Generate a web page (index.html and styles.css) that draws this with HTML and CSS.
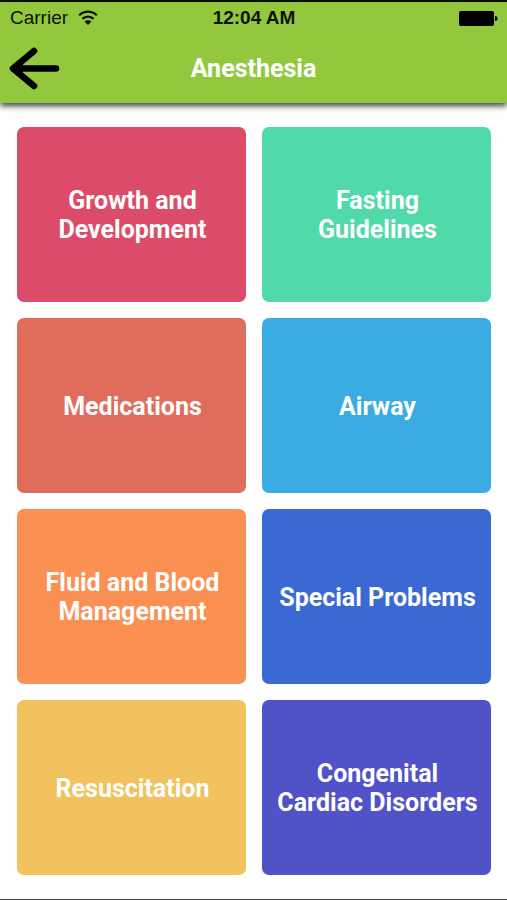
FILE: index.html
```html
<!DOCTYPE html>
<html lang="en">
<head>
    <meta charset="UTF-8">
    <meta name="viewport" content="width=device-width, initial-scale=1">
    <title>Anesthesia</title>
    <link rel="stylesheet" href="styles.css">
</head>
<body>
    <header class="header">
        <div class="status-bar">
            <div class="carrier">
                <span>Carrier</span>
                <svg class="wifi" width="20" height="16" viewBox="0 0 20 16" aria-hidden="true">
                    <path d="M1.2 5.2a12.6 12.6 0 0 1 17.6 0" fill="none" stroke="#0c1204" stroke-width="2.3"/>
                    <path d="M4.5 8.8a8 8 0 0 1 11 0" fill="none" stroke="#0c1204" stroke-width="2.3"/>
                    <path d="M10 15 6.6 11.7a4.8 4.8 0 0 1 6.8 0z" fill="#0c1204"/>
                </svg>
            </div>
            <time class="clock">12:04 AM</time>
            <svg class="battery" width="39" height="15" viewBox="0 0 39 15" aria-hidden="true">
                <rect width="35" height="15" rx="2"/>
                <path d="M36 5q2.5 0 2.5 2.5T36 10z"/>
            </svg>
        </div>
        <nav class="nav-bar">
            <button class="back" type="button" aria-label="Back">
                <svg width="52" height="44" viewBox="0 0 52 44" aria-hidden="true">
                    <path d="M25 4 4 21.500l21 17.500M6 21.500h41" fill="none" stroke="#000" stroke-width="6.600" stroke-linecap="round" stroke-linejoin="round"/>
                    <path d="M3 21.500 14 13v17z"/>
                </svg>
            </button>
            <h1>Anesthesia</h1>
        </nav>
    </header>

    <main class="topics">
        <button class="topic pink" type="button">Growth and<br>Development</button>
        <button class="topic green" type="button">Fasting<br>Guidelines</button>
        <button class="topic coral" type="button">Medications</button>
        <button class="topic sky" type="button">Airway</button>
        <button class="topic orange" type="button">Fluid and Blood<br>Management</button>
        <button class="topic blue" type="button">Special Problems</button>
        <button class="topic yellow" type="button">Resuscitation</button>
        <button class="topic purple" type="button">Congenital<br>Cardiac Disorders</button>
    </main>
</body>
</html>
```
FILE: styles.css
```css
* {box-sizing: border-box}
body {display: flex; flex-direction: column; min-height: 100vh; margin: 0; background: #fff; border-bottom: 1px solid #444; font-family: Roboto, "Liberation Sans", sans-serif}
button {border: none; cursor: pointer; font-family: inherit}

.header {background: #93c83e; border-top: 2px solid #0a0d04; box-shadow: 0 3px 6px rgba(0,0,0,0.75)}
.status-bar {display: grid; grid-template-columns: 1fr auto 1fr; align-items: center; height: 32px; padding: 0 9px 0 10px; font-family: "Liberation Sans", Arial, sans-serif; font-size: 19px; color: #0c1204}
.carrier {display: flex; align-items: center; gap: 10px}
.clock {font-weight: bold}
.battery {justify-self: end}
.nav-bar {display: grid; grid-template-columns: 1fr auto 1fr; align-items: center; height: 69px; padding: 0 9px}
.back {display: flex; justify-self: start; padding: 0; background: none}
h1 {margin: 0; font-size: 25px; line-height: 30px; font-weight: bold; color: #fff}

.topics {flex: 1; display: grid; grid-template-columns: 1fr 1fr; grid-auto-rows: 1fr; gap: 16px; padding: 24px 16px 24px 17px}
.topic {padding: 1px 0 0 2px; border-radius: 7px; font-size: 25px; line-height: 29px; font-weight: bold; color: #fff}
.pink {background: #dc4b67}
.green {background: #50d9a9}
.coral {background: #e06d5c}
.sky {background: #3aace3}
.orange {background: #fb9053}
.blue {background: #3b69d3}
.yellow {background: #f2c25e}
.purple {background: #5052c7}
```
